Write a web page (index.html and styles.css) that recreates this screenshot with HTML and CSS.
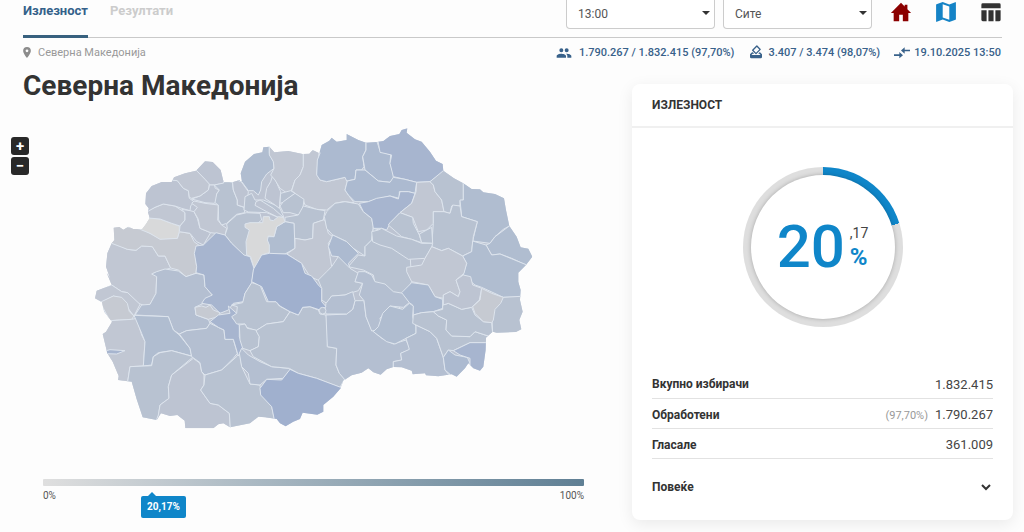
FILE: index.html
```html
<!DOCTYPE html>
<html lang="mk">
<head>
<meta charset="utf-8">
<meta name="viewport" content="width=device-width, initial-scale=1">
<title>Северна Македонија</title>
<link rel="stylesheet" href="styles.css">
</head>
<body>
<header class="topbar">
  <nav class="tabs">
    <a class="tab tab-active" href="#turnout">Излезност</a>
    <a class="tab" href="#results">Резултати</a>
  </nav>
  <div class="tools">
    <div class="pick"><select class="pick-input" aria-label="13:00"><option>13:00</option></select></div>
    <div class="pick"><select class="pick-input" aria-label="Сите"><option>Сите</option></select></div>
    <a class="tool tool-home" href="#home"><svg viewBox="0 0 24 24"><path d="M10 22v-7h4v7h6v-9h3L19 9V4h-3v2L12 2 1 13h3v9z"/></svg></a>
    <a class="tool tool-map" href="#map"><svg viewBox="2 2 20 20"><path d="M20.500 3l-.16.030L15 5.100 9 3 3.360 4.900c-.21.070-.36.250-.36.480V20.500c0 .28.220.5.5.5l.160-.03L9 18.900l6 2.100 5.640-1.900c.21-.07.360-.25.360-.48V3.500c0-.28-.22-.5-.5-.5zM15 19l-6-2.110V5l6 2.110z"/></svg></a>
    <a class="tool tool-table" href="#table"><svg viewBox="0 0 24 24"><path d="M3 2.500h18a1.500 1.500 0 0 1 1.500 1.500v4h-21V4A1.500 1.500 0 0 1 3 2.500zM1.500 10h5.700v12H3a1.500 1.500 0 0 1-1.500-1.500zM9.200 10h5.600v12H9.200zM16.800 10h5.700v10.500A1.500 1.500 0 0 1 21 22h-4.200z"/></svg></a>
  </div>
</header>

<div class="infobar">
  <div class="crumb">
    <svg class="pin" viewBox="0 0 14 20"><path fill-rule="evenodd" d="M7 0a7 7 0 0 0-7 7c0 5.200 7 13 7 13s7-7.800 7-13a7 7 0 0 0-7-7zm0 4.500a2.500 2.500 0 1 1 0 5 2.500 2.500 0 0 1 0-5z"/></svg>
    <span>Северна Македонија</span>
  </div>
  <ul class="facts">
    <li class="fact fact-people"><svg viewBox="0 0 24 24"><path d="M16 11a3 3 0 1 0 0-6 3 3 0 0 0 0 6zM8 11a3 3 0 1 0 0-6 3 3 0 0 0 0 6zM8 13c-2.300 0-7 1.200-7 3.500V19h14v-2.500C15 14.200 10.300 13 8 13zM16 13l-1 .1c1.200.8 2 2 2 3.400V19h6v-2.500c0-2.300-4.700-3.500-7-3.500z"/></svg>1.790.267 / 1.832.415 (97,70%)</li>
    <li class="fact"><svg viewBox="0 2 24 24"><path fill-rule="evenodd" d="M18 13h-.7l-2 2H17l1.800 2H5.200L7 15h2.200l-2-2H6l-3 3v4a2 2 0 0 0 2 2h14a2 2 0 0 0 2-2v-4zM19 7.900l-5-5a1 1 0 0 0-1.400 0L6.300 9.200a1 1 0 0 0 0 1.400l5 5a1 1 0 0 0 1.400 0L19 9.300a1 1 0 0 0 0-1.400zM12 13.500L8.400 9.900l4.900-4.900 3.600 3.600z"/></svg>3.407 / 3.474 (98,07%)</li>
    <li class="fact"><svg viewBox="0 0 24 24"><path d="M8 14H0v2.500h8V20l5.500-4.800L8 10.500zM16 13V9.500h8V7h-8V3.500l-5.500 4.700z"/></svg>19.10.2025 13:50</li>
  </ul>
</div>

<main class="content">
  <section class="region">
    <h1 class="title">Северна Македонија</h1>
    <div class="map">
      <div class="zoom">
        <button class="zoom-btn" type="button">+</button>
        <button class="zoom-btn" type="button">−</button>
      </div>
      <svg class="map-art" viewBox="0 0 1350 960">
        <defs><clipPath id="land"><path id="coast" d="M71 323L88 321L100 329L115 320L130 327L156 328L168 312L179 294L174 277L176 265L166 252L168 220L185 198L215 186L245 186L252 172L285 160L318 152L345 124L368 126L392 150L401 187L427 187L447 181L456 186L452 160L465 125L492 102L517 97L520 82L538 80L553 97L595 93L638 102L658 101L668 90L688 100L695 75L718 62L725 53L740 65L770 60L770 42L805 60L828 68L860 66L880 63L900 48L928 42L935 30L952 25L950 38L975 58L995 65L1020 95L1038 122L1058 132L1060 152L1092 175L1120 190L1145 207L1170 208L1180 217L1215 222L1242 235L1248 270L1258 318L1280 350L1292 382L1315 386L1327 410L1308 435L1285 458L1285 485L1292 510L1290 540L1298 575L1288 600L1294 628L1278 636L1220 638L1208 635L1188 653L1187 690L1180 740L1170 752L1150 745L1135 730L1125 745L1100 770L1085 763L1045 769L1008 766L1005 760L968 763L965 752L935 742L910 741L890 748L872 764L850 757L835 745L815 758L785 766L760 782L752 805L730 830L700 855L700 875L682 884L638 878L630 897L610 905L587 919L570 910L560 897L525 892L505 890L480 910L420 922L400 910L385 913L370 925L286 925L284 902L262 885L240 888L213 880L200 900L158 892L140 838L125 785L84 780L86 768L68 725L52 700L38 642L48 635L66 605L42 575L36 547L15 535L20 512L65 495L50 458L60 475L48 440L52 400L65 370L73 360Z"/></clipPath></defs>
        <g class="areas" clip-path="url(#land)">
          <use class="a4" href="#coast"/>
          <g>
            <path class="a3" d="M30 370L65 370L80 372L112 388L138 391L155 378L187 380L205 408L225 408L242 444L190 460L200 468L198 520L180 553L165 557L145 550L113 518L95 515L65 495L30 480Z"/>
            <path class="a2" d="M50 310L156 328L180 340L210 356L262 355L268 335L300 340L312 365L330 378L315 400L320 440L318 460L288 470L265 450L242 444L225 408L205 408L187 380L155 378L138 391L112 388L65 370L30 360Z"/>
            <path class="a1" d="M150 328L168 290L179 294L210 297L245 310L268 318L268 335L262 355L210 358L180 340Z"/>
            <path class="a3" d="M160 280L195 262L220 252L255 258L285 278L285 300L270 318L245 310L210 297L175 294Z"/>
            <path class="a4" d="M160 268L150 180L245 180L262 182L280 205L295 212L298 235L312 245L302 258L300 272L275 265L255 258L220 252L195 262L172 275Z"/>
            <path class="a4" d="M318 150L345 110L410 120L401 190L373 195L358 195L345 178Z"/>
            <path class="a4" d="M358 195L373 195L376 205L388 210L380 222L380 245L372 250L345 248L305 237L330 228L355 210Z"/>
            <path class="a3" d="M240 180L252 160L318 150L345 178L358 192L355 210L330 228L305 235L298 232L295 212L280 205L262 182Z"/>
            <path class="a4" d="M275 268L300 272L312 275L322 295L330 325L362 338L340 375L320 365L300 340L268 335L270 318L285 300L285 278Z"/>
            <path class="a3" d="M305 250L322 262L312 275L325 298L330 325L362 338L378 340L405 348L410 325L395 315L383 300L385 255L345 250L312 243Z"/>
            <path class="a5" d="M401 180L427 187L430 210L442 240L442 255L462 262L464 278L440 283L410 310L395 315L386 300L385 255L375 248L380 222L388 210L373 195L401 189Z"/>
            <path class="a4" d="M427 180L447 175L475 215L472 245L464 262L442 255L442 240L430 210Z"/>
            <path class="a5" d="M410 312L440 285L470 278L510 280L515 300L490 320L480 410L462 408L425 370L405 345L412 325Z"/>
          </g>
          <g transform="translate(420 0)">
            <path class="a7" d="M118 70L118 100L130 125L132 145L110 162L95 185L92 210L85 225L70 212L55 212L36 186L20 180L25 80Z"/>
            <path class="a5" d="M45 230L65 220L75 240L100 240L135 255L148 262L162 292L140 290L110 278L55 276L42 270Z"/>
            <path class="a4" d="M130 160L145 200L152 215L148 265L135 255L105 235L110 205L122 185Z"/>
            <path class="a4" d="M78 245L90 240L130 265L160 292L145 292L110 275L75 256Z"/>
            <path class="a3" d="M118 78L220 90L220 140L210 165L195 180L185 210L175 222L150 205L135 180L122 165L132 145L130 125L118 105Z"/>
            <path class="a3" d="M220 90L268 90L260 160L270 180L290 185L345 172L352 183L345 210L355 225L372 248L340 245L315 250L290 270L260 268L225 255L220 240L185 212L195 180L210 165L220 140Z"/>
            <path class="a5" d="M152 220L182 212L195 220L160 247L150 250Z"/>
            <path class="a5" d="M160 245L195 220L222 238L218 270L205 285L180 278L160 278L150 258Z"/>
            <path class="a5" d="M165 292L205 285L220 258L260 268L285 272L280 300L250 310L248 355L225 360L192 355L192 310L165 305Z"/>
            <path class="a7" d="M165 305L192 310L195 385L165 402L118 402L108 350L132 350L140 320Z"/>
            <path class="a3" d="M285 300L295 340L308 350L295 370L300 410L305 440L290 460L268 482L240 470L215 430L170 402L195 385L195 355L225 360L248 355L250 310L280 300Z"/>
            <path class="a1" d="M45 312L60 308L98 308L100 290L118 290L120 300L130 302L145 290L160 292L165 305L140 320L132 350L115 348L112 360L118 375L118 398L95 405L85 425L72 445L62 410L50 405L48 365L58 330L45 322Z"/>
            <path class="a8" d="M250 30L408 30L408 90L398 110L402 140L395 150L378 150L375 178L350 183L345 172L290 185L270 180L260 165L262 120L270 100Z"/>
            <path class="a8" d="M408 50L438 56L450 92L482 105L480 130L490 160L490 175L480 187L445 183L405 150L398 110L408 90Z"/>
            <path class="a5" d="M290 275L315 250L345 245L385 252L400 275L425 295L430 320L425 360L405 380L405 408L370 385L350 365L308 345L290 325L283 290Z"/>
            <path class="a5" d="M448 330L430 325L425 360L405 380L405 408L385 405L355 440L400 450L430 465L435 490L500 580L545 485L540 400L448 365Z"/>
            <path class="a8" d="M308 345L350 365L385 400L355 430L360 445L350 455L330 450L325 410L305 408L295 380Z"/>
          </g>
          <g transform="translate(870 0)">
            <path class="a9" d="M-10 40L0 97L35 105L30 130L40 170L75 178L110 187L150 185L195 152L180 80L80 0Z"/>
            <path class="a8" d="M-72 150L-45 150L-5 183L30 187L40 172L75 178L110 187L105 220L85 215L58 215L58 235L30 228L0 235L-35 245L-75 245L-95 225L-105 210L-98 183L-75 178Z"/>
            <path class="a9" d="M-62 250L-35 245L-10 235L30 228L55 237L60 215L85 215L105 220L95 250L60 278L30 310L20 330L5 325L-20 325L-25 295L-50 275Z"/>
            <path class="a3" d="M110 187L150 185L160 195L165 215L185 240L192 275L160 275L160 310L140 330L115 335L98 292L60 278L95 250L108 215Z"/>
            <path class="a5" d="M150 185L190 152L250 160L250 240L240 242L240 258L215 258L210 280L192 275L185 240L165 215L160 195Z"/>
            <path class="a7" d="M250 180L400 200L388 318L370 328L345 350L330 370L278 363L292 305L245 290L240 240L250 240Z"/>
            <path class="a5" d="M160 275L192 275L210 280L218 255L240 258L245 290L292 305L280 350L275 395L248 408L205 385L185 392L155 380L160 310Z"/>
            <path class="a5" d="M60 278L98 292L100 310L118 345L125 368L95 358L65 350L25 315L30 308Z"/>
            <path class="a5" d="M118 342L155 322L158 370L125 368Z"/>
            <path class="a7" d="M345 350L388 318L480 340L480 445L438 435L395 415L360 402L335 405L318 375L330 370Z"/>
            <path class="a7" d="M278 363L318 375L335 405L360 402L448 438L450 530L370 532L305 502L285 495L250 465L252 455L260 430L248 408L275 395Z"/>
            <path class="a5" d="M-5 330L5 325L50 348L95 358L125 370L158 370L155 382L135 415L85 418L35 385L0 375L-22 365L-25 335Z"/>
            <path class="a3" d="M155 380L185 392L205 385L248 408L260 430L252 460L228 480L240 515L235 530L210 515L190 525L190 535L165 530L145 495L95 485L80 455L80 442L125 435L135 415Z"/>
          </g>
          <g transform="translate(0 450)">
            <path class="a6" d="M185 12L200 5L225 -3L265 3L288 20L318 10L342 15L345 50L367 75L340 100L315 112L318 135L355 148L360 160L350 175L290 182L268 192L250 180L235 140L135 135L155 105L180 103L198 70L200 20Z"/>
            <path class="a9" d="M378 -112L405 -105L425 -80L462 -45L480 -40L492 -5L485 40L465 70L460 95L430 100L415 120L390 130L365 105L335 100L345 85L367 75L345 50L342 15L318 8L320 -10L313 -50L318 -72L340 -75Z"/>
            <path class="a2" d="M315 112L335 108L348 112L360 105L370 120L390 128L385 140L355 148L318 135Z"/>
            <path class="a3" d="M5 62L65 45L95 65L113 68L150 103L132 138L110 110L95 85L70 78L36 97L5 85Z"/>
            <path class="a2" d="M30 97L70 78L95 82L112 100L118 125L132 138L125 148L60 152Z"/>
            <path class="a3" d="M60 152L125 148L140 145L155 195L165 215L160 288L120 290L113 335L60 340L10 200Z"/>
            <path class="a9" d="M45 243L60 239L105 242L80 252L48 251Z"/>
            <path class="a7" d="M132 136L235 140L250 180L268 195L300 235L305 258L245 242L205 248L190 260L185 285L160 288L165 215L155 190Z"/>
            <path class="a5" d="M113 335L120 290L185 287L190 260L210 248L245 242L310 260L245 315L235 350L237 385L210 405L205 440L200 470L130 470Z"/>
            <path class="a4" d="M310 265L330 280L335 305L342 315L342 345L332 360L360 400L385 405L418 430L422 490L180 500L205 435L210 405L237 385L235 350L245 315Z"/>
            <path class="a6" d="M268 192L290 182L350 175L360 160L385 172L402 180L405 208L430 208L442 250L430 265L395 300L345 315L335 305L330 278L305 260L300 235Z"/>
            <path class="a5" d="M442 258L395 300L345 315L342 345L332 360L360 400L385 405L418 430L422 490L552 470L552 442L545 410L512 370L510 345L480 342L455 290L450 245Z"/>
            <path class="a9" d="M360 155L385 135L420 130L415 108L440 130L428 145L448 165L448 200L460 230L445 258L430 208L405 208L402 180L385 172Z"/>
          </g>
          <g transform="translate(420 450)">
            <path class="a6" d="M35 235L55 255L90 275L125 290L175 295L180 300L160 325L110 328L90 345L60 342L55 310L35 290L28 250Z"/>
            <path class="a5" d="M65 38L90 45L110 95L138 95L148 108L180 125L160 155L110 162L78 182L50 172L45 162L20 162L5 140L20 130L22 110L5 105L38 98L45 70Z"/>
            <path class="a5" d="M28 165L45 162L52 175L78 180L88 200L85 230L60 242L38 235L30 210Z"/>
            <path class="a5" d="M180 125L205 135L218 112L240 110L265 120L270 132L288 135L295 180L292 230L320 235L318 285L328 310L345 325L330 352L260 325L205 310L178 295L125 290L70 260L60 242L85 230L88 200L78 182L110 162L160 155Z"/>
            <path class="a10" d="M90 355L110 328L155 330L180 298L205 310L260 325L340 355L340 480L150 480L132 445L125 410L92 375Z"/>
            <path class="a6" d="M288 135L350 132L368 118L375 92L402 92L408 140L425 180L455 205L490 222L528 210L542 238L512 250L515 270L490 275L490 330L345 330L328 310L318 285L320 235L292 230Z"/>
            <path class="a5" d="M265 30L290 5L305 -10L325 -40L360 -5L385 10L375 35L398 40L385 62L365 68L345 75L305 78L290 100L275 90L275 55Z"/>
            <path class="a6" d="M288 100L305 78L345 75L368 65L375 92L368 118L350 132L288 132L285 118Z"/>
            <path class="a10" d="M70 0L72 -5L95 -45L118 -50L170 -48L215 -20L225 10L245 18L265 45L275 55L275 95L288 110L270 120L240 110L218 112L205 135L180 125L150 108L138 95L115 95L95 50L65 35Z"/>
            <path class="a5" d="M268 122a10 10 0 1 0 20 0a10 10 0 1 0 -20 0Z"/>
            <path class="a6" d="M385 5L405 5L425 15L435 35L465 42L490 65L520 70L538 98L520 112L480 108L450 145L455 165L440 180L425 183L408 140L402 92L388 75L398 40L375 35Z"/>
          </g>
          <g transform="translate(870 450)">
            <path class="a8" d="M65 68L95 38L145 45L165 80L188 88L188 115L160 125L125 128L100 135L98 105L88 98Z"/>
            <path class="a7" d="M0 155L8 130L30 108L68 118L88 100L100 108L98 140L108 170L108 190L78 205L45 222L20 215L-20 185L-5 170Z"/>
            <path class="a6" d="M108 165L150 185L170 205L190 262L195 300L220 330L40 330L40 275L65 270L62 250L88 238L78 205L108 190Z"/>
            <path class="a5" d="M98 160L100 135L125 128L160 125L175 138L200 150L198 180L215 198L270 200L285 185L325 198L318 218L270 218L220 242L205 240L190 262L170 205L150 185L108 165Z"/>
            <path class="a5" d="M188 105L205 100L245 118L275 112L285 135L310 155L335 158L338 190L325 198L285 185L270 200L215 198L198 180L200 150L175 138L160 125L188 118Z"/>
            <path class="a4" d="M190 75L210 65L235 80L240 65L228 30L250 15L272 20L278 45L305 55L298 90L275 112L245 118L205 100L190 105Z"/>
            <path class="a5" d="M370 82L440 78L440 195L338 192L335 118Z"/>
            <path class="a2" d="M305 55L335 70L370 82L362 100L345 118L340 150L335 158L310 155L285 130L278 110L300 90Z"/>
            <path class="a8" d="M190 262L205 240L225 255L262 262L270 280L255 300L230 330L195 300Z"/>
            <path class="a9" d="M220 242L270 218L325 218L317 310L270 310L270 265L240 255Z"/>
          </g>
        </g>
      </svg>
    </div>
    <div class="legend">
      <div class="legend-bar"></div>
      <div class="legend-ends"><span>0%</span><span>100%</span></div>
      <div class="legend-tip" style="left: 20.17%">20,17%</div>
    </div>
  </section>

  <section class="card">
    <h2 class="card-head">ИЗЛЕЗНОСТ</h2>
    <div class="card-body">
      <div class="gauge">
        <div class="gauge-face">
          <span class="gauge-whole">20</span>
          <span class="gauge-side"><span class="gauge-dec">,17</span><span class="gauge-pct">%</span></span>
        </div>
      </div>
      <table class="stats">
        <tr><th scope="row">Вкупно избирачи</th><td>1.832.415</td></tr>
        <tr><th scope="row">Обработени</th><td><span class="share">(97,70%)</span>1.790.267</td></tr>
        <tr><th scope="row">Гласале</th><td>361.009</td></tr>
      </table>
      <button class="more" type="button">Повеќе
        <svg class="more-icon" viewBox="0 0 12 8"><path d="M2 2l4 4 4-4"/></svg>
      </button>
    </div>
  </section>
</main>
</body>
</html>
```
FILE: styles.css
```css
* { box-sizing: border-box; }
body {
  margin: 0;
  background: #fdfdfd;
  color: #333;
  font-family: Roboto, "Noto Sans", sans-serif;
  font-size: 12px;
}
a { text-decoration: none; color: inherit; }
button { font: inherit; color: inherit; border: 0; cursor: pointer; }

.topbar {
  display: flex;
  justify-content: space-between;
  height: 38px;
  margin: 0 22px 0 23px;
  border-bottom: 1px solid #c9c9c9;
}
.tabs { display: flex; gap: 22px; }
.tab {
  height: 38px;
  padding-top: 1px;
  font-size: 13px;
  line-height: 20px;
  font-weight: 700;
  color: #ccc;
}
.tab-active { color: #34618a; border-bottom: 3px solid #38617f; }
.tools { display: flex; align-items: flex-start; gap: 8px; }
.pick { position: relative; width: 149px; }
.pick::after {
  content: "";
  position: absolute;
  right: 5px;
  top: 11px;
  border: 4px solid transparent;
  border-top-color: #333;
  border-bottom: 0;
}
.pick-input {
  appearance: none;
  width: 100%;
  height: 29px;
  padding: 0 11px;
  border: 1px solid #ccc;
  border-top: 0;
  border-radius: 0 0 4px 4px;
  background: #fff;
  color: #555;
  font: 12px/28px Roboto, sans-serif;
}
.tool { width: 22px; height: 24px; margin-left: 15px; }
.tool:first-of-type { margin-left: 10px; }
.tool svg { display: block; width: 22px; height: 24px; fill: currentColor; }
.tool-home { color: #8b0000; }
.tool-map { color: #1583c6; }
.tool-table { color: #333; }

.infobar {
  display: flex;
  justify-content: space-between;
  align-items: center;
  height: 29px;
  margin: 0 23px;
}
.crumb { display: flex; align-items: center; gap: 7px; font-size: 11px; color: #999; }
.pin { width: 8px; height: 11px; fill: #8c8c8c; }
.facts {
  display: flex;
  gap: 14px;
  margin: 0;
  padding: 0;
  list-style: none;
  font-size: 11px;
  font-weight: 500;
  color: #38618a;
}
.fact { display: flex; align-items: center; gap: 4px; }
.fact-people { gap: 7px; }
.fact svg { width: 16px; height: 16px; fill: currentColor; }

.content {
  display: grid;
  grid-template-columns: minmax(0, 1fr) 381px;
  gap: 48px;
  align-items: start;
  padding: 0 11px 12px;
}
.title { margin: 0 0 0 12px; font-size: 28px; line-height: 38px; font-weight: 700; }
.map { position: relative; padding: 15px 0 0 79px; }
.map-art { display: block; width: 100%; max-width: 450px; }
.zoom { position: absolute; left: 0; top: 32px; display: grid; gap: 2px; }
.zoom-btn {
  width: 18px;
  height: 18px;
  padding: 0;
  border-radius: 3px;
  background: #292929;
  color: #fff;
  font-size: 15px;
  line-height: 18px;
  font-weight: 700;
}
.areas path, .areas use { stroke: #dde4ed; stroke-width: 3; stroke-linejoin: round; }
.a1 { fill: #d8d9da; }
.a2 { fill: #c6cad2; }
.a3 { fill: #c1c7d3; }
.a4 { fill: #bdc4d2; }
.a5 { fill: #b8c2d1; }
.a6 { fill: #b4bfd1; }
.a7 { fill: #b0bdd0; }
.a8 { fill: #acbad0; }
.a9 { fill: #a7b5cf; }
.a10 { fill: #a0b0ce; }

.legend { position: relative; margin: 39px 0 0 32px; }
.legend-bar {
  height: 7px;
  border-radius: 1px;
  background: linear-gradient(90deg, #dfdfdf, #a9b8c2 40%, #5f7f94);
}
.legend-ends {
  display: flex;
  justify-content: space-between;
  padding-top: 3px;
  font-size: 10px;
  line-height: 14px;
  color: #555;
}
.legend-tip {
  position: absolute;
  top: 17px;
  margin-left: -11px;
  padding: 0 6px;
  border-radius: 2px;
  background: #0f86c9;
  color: #fff;
  font-size: 10px;
  line-height: 22px;
  font-weight: 700;
}
.legend-tip::before {
  content: "";
  position: absolute;
  left: 7px;
  top: -4px;
  border: 4px solid transparent;
  border-top: 0;
  border-bottom-color: #0f86c9;
}

.card {
  margin-top: 17px;
  border-radius: 8px;
  background: #fff;
  box-shadow: 0 4px 16px rgba(0, 0, 0, .08);
}
.card-head {
  margin: 0;
  padding: 0 20px;
  border-bottom: 2px solid #f0f0f0;
  font-size: 12px;
  line-height: 42px;
  font-weight: 700;
}
.card-body { padding: 39px 20px 19px; }
.gauge {
  width: 160px;
  height: 160px;
  margin: 0 auto 41px;
  padding: 8px;
  border-radius: 50%;
  background: conic-gradient(#0f86c9 20.17%, #dedede 0);
}
.gauge-face {
  display: flex;
  justify-content: center;
  align-items: center;
  gap: 5px;
  height: 100%;
  border-radius: 50%;
  background: #fff;
  box-shadow: 0 0 4px rgba(0, 0, 0, .25);
}
.gauge-whole { font-size: 60px; line-height: 60px; font-weight: 500; color: #0f86c9; }
.gauge-side { display: grid; }
.gauge-dec { font-size: 14px; line-height: 20px; color: #444; }
.gauge-pct { font-size: 24px; line-height: 28px; font-weight: 700; color: #0f86c9; }
.stats { width: 100%; border-collapse: collapse; }
.stats th, .stats td { height: 30px; padding: 3px 0 0; border-bottom: 1px solid #e2e2e2; }
.stats th { text-align: left; font-size: 12px; font-weight: 700; }
.stats td { text-align: right; font-size: 13px; color: #444; }
.share { margin-right: 7px; font-size: 11px; color: #999; }
.more {
  display: flex;
  justify-content: space-between;
  align-items: center;
  width: 100%;
  height: 28px;
  margin-top: 14px;
  padding: 0 1px 0 0;
  background: none;
  font-weight: 700;
}
.more-icon { width: 12px; height: 8px; fill: none; stroke: #333; stroke-width: 2; }
```
